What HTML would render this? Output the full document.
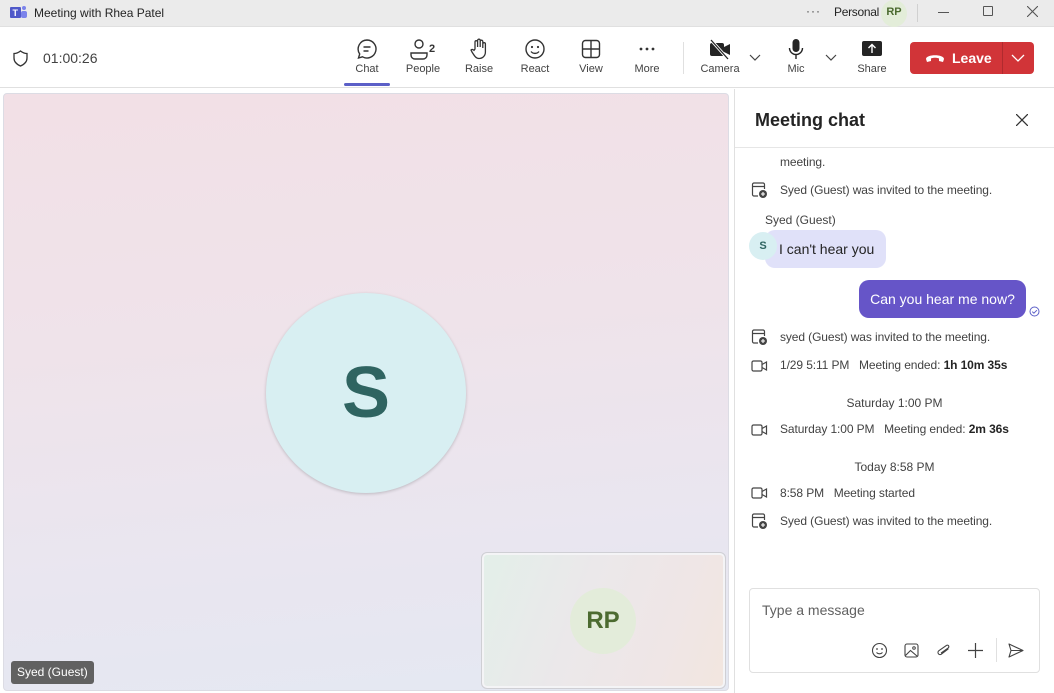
<!DOCTYPE html>
<html><head><meta charset="utf-8"><style>
*{box-sizing:border-box;margin:0;padding:0}
body{width:1054px;height:693px;overflow:hidden;font-family:"Liberation Sans",sans-serif;background:#fff;position:relative;color:#242424}
.abs{position:absolute}
.title{left:0;top:0;width:1054px;height:27px;background:#ebebeb;border-bottom:1px solid #e0e0e0}
.tb{top:27px;left:0;width:1054px;height:61px;background:#fff;border-bottom:1px solid #e0e0e0}
.btn{position:absolute;top:38px;width:50px;text-align:center;font-size:11px;color:#424242}
.btn svg{display:block;margin:0 auto 3px}
.stage{left:3px;top:93px;width:726px;height:598px;border-radius:4px;border:1px solid #dcdce4;background:linear-gradient(175deg,#f2e0e6 0%,#efe3ea 40%,#e9e6f0 75%,#e4e8f2 100%)}
.panel{left:734px;top:89px;width:320px;height:604px;background:#fff;border-left:1px solid #e0e0e0}
.sys{position:absolute;left:780px;font-size:12px;color:#424242;letter-spacing:-0.1px}
.ic{position:absolute;left:751px}
.ctr{position:absolute;left:735px;width:319px;text-align:center;font-size:12px;color:#424242}
</style></head><body>
<div class="abs title"></div>
<svg class="abs" style="left:10px;top:5px" width="17" height="15" viewBox="0 0 17 15"><rect x="0" y="2" width="11" height="11" rx="1" fill="#5059c9"/><text x="2.5" y="11" font-size="9" font-weight="bold" fill="#fff" font-family="Liberation Sans">T</text><circle cx="14" cy="3" r="2" fill="#7b83eb"/><rect x="11" y="6" width="6" height="7" rx="2" fill="#7b83eb"/></svg>
<div class="abs" style="left:34px;top:6px;font-size:12px;color:#242424">Meeting with Rhea Patel</div>
<div class="abs" style="left:806px;top:4px;font-size:12px;color:#424242;letter-spacing:1px">···</div>
<div class="abs" style="left:834px;top:5px;font-size:12px;color:#242424;letter-spacing:-0.3px">Personal</div>
<div class="abs" style="left:881px;top:0;width:26px;height:27px;border-radius:50%;background:#e3edd9;font-size:11px;font-weight:bold;color:#4c6b30;text-align:center;line-height:24px">RP</div>
<div class="abs" style="left:917px;top:4px;width:1px;height:18px;background:#d0d0d0"></div>
<div class="abs" style="left:938px;top:12px;width:11px;height:1px;background:#555"></div>
<div class="abs" style="left:983px;top:6px;width:10px;height:10px;border:1px solid #555;border-radius:1px"></div>
<svg class="abs" style="left:1027px;top:6px" width="11" height="11"><path d="M0 0L11 11M11 0L0 11" stroke="#555" stroke-width="1.1"/></svg>

<div class="abs tb"></div>
<svg class="abs" style="left:13px;top:50px" width="15" height="17" viewBox="0 0 15 17"><path d="M7.5 1C5 3 3 3.5 1 3.5V8c0 4 3 6.5 6.5 8C11 14.5 14 12 14 8V3.5C12 3.5 10 3 7.5 1z" fill="none" stroke="#333" stroke-width="1.3"/></svg>
<div class="abs" style="left:43px;top:50px;font-size:14px;color:#424242">01:00:26</div>

<div class="btn" style="left:342px"><svg width="22" height="22" viewBox="0 0 22 22"><path d="M11 2a9 9 0 1 1-4.5 16.8L2.5 20l1.2-4A9 9 0 0 1 11 2z" fill="none" stroke="#333" stroke-width="1.4"/><path d="M7.5 9h7M7.5 13h5" stroke="#333" stroke-width="1.4"/></svg>Chat</div>
<div class="abs" style="left:344px;top:83px;width:46px;height:3px;background:#5b5fc7;border-radius:2px"></div>
<div class="btn" style="left:398px"><svg width="30" height="22" viewBox="0 0 30 22"><circle cx="11" cy="6" r="4" fill="none" stroke="#333" stroke-width="1.4"/><path d="M3 15h16v2a4 4 0 0 1-4 4H7a4 4 0 0 1-4-4z" fill="none" stroke="#333" stroke-width="1.4"/><text x="21" y="14" font-size="11" font-weight="bold" fill="#333" font-family="Liberation Sans">2</text></svg>People</div>
<div class="btn" style="left:454px"><svg width="22" height="22" viewBox="0 0 22 22"><path d="M7 11V4a1.3 1.3 0 0 1 2.6 0v5V2.5a1.3 1.3 0 0 1 2.6 0V9V3.5a1.3 1.3 0 0 1 2.6 0V10V6a1.3 1.3 0 0 1 2.6 0v8c0 4-3 6.5-6.5 6.5C8 20.5 6.5 18 4 14l-1-2c.8-.9 2.2-.6 3 .3z" fill="none" stroke="#333" stroke-width="1.3"/></svg>Raise</div>
<div class="btn" style="left:510px"><svg width="22" height="22" viewBox="0 0 22 22"><circle cx="11" cy="11" r="9" fill="none" stroke="#333" stroke-width="1.4"/><circle cx="8" cy="9" r="1.1" fill="#333"/><circle cx="14" cy="9" r="1.1" fill="#333"/><path d="M7 13.5c2 2.5 6 2.5 8 0" fill="none" stroke="#333" stroke-width="1.4"/></svg>React</div>
<div class="btn" style="left:566px"><svg width="22" height="22" viewBox="0 0 22 22"><rect x="2.5" y="2.5" width="17" height="17" rx="3" fill="none" stroke="#333" stroke-width="1.4"/><path d="M11 2.5v17M2.5 11h17" stroke="#333" stroke-width="1.4"/></svg>View</div>
<div class="btn" style="left:622px"><svg width="22" height="22" viewBox="0 0 22 22"><circle cx="5" cy="11" r="1.4" fill="#333"/><circle cx="11" cy="11" r="1.4" fill="#333"/><circle cx="17" cy="11" r="1.4" fill="#333"/></svg>More</div>
<div class="abs" style="left:683px;top:42px;width:1px;height:32px;background:#e0e0e0"></div>
<div class="btn" style="left:695px"><svg width="24" height="22" viewBox="0 0 24 22"><rect x="2" y="5" width="14" height="13" rx="2" fill="#242424"/><path d="M16 9l6-3v11l-6-3z" fill="#242424"/><path d="M3 2l17 19" stroke="#fff" stroke-width="3"/><path d="M3 2l17 19" stroke="#242424" stroke-width="1.3"/></svg>Camera</div>
<svg class="abs" style="left:749px;top:54px" width="12" height="8"><path d="M1 1l5 5 5-5" fill="none" stroke="#444" stroke-width="1.2"/></svg>
<div class="btn" style="left:771px"><svg width="22" height="22" viewBox="0 0 22 22"><rect x="7.5" y="1" width="7" height="13" rx="3.5" fill="#242424"/><path d="M4.5 10a6.5 6.5 0 0 0 13 0M11 16.5V21" fill="none" stroke="#242424" stroke-width="1.4"/></svg>Mic</div>
<svg class="abs" style="left:825px;top:54px" width="12" height="8"><path d="M1 1l5 5 5-5" fill="none" stroke="#444" stroke-width="1.2"/></svg>
<div class="btn" style="left:847px"><svg width="22" height="22" viewBox="0 0 22 22"><rect x="1" y="3" width="20" height="15" rx="2" fill="#242424"/><path d="M11 15V7M7.5 10L11 6.5l3.5 3.5" fill="none" stroke="#fff" stroke-width="1.4"/></svg>Share</div>
<div class="abs" style="left:910px;top:42px;width:124px;height:32px;border-radius:4px;background:#d13438"></div>
<div class="abs" style="left:1002px;top:42px;width:1px;height:32px;background:#b02a2e"></div>
<svg class="abs" style="left:925px;top:53px" width="20" height="10" viewBox="0 0 20 10"><path d="M1 6C1 1 19 1 19 6l-1 3-4-1V5.5C12 4.5 8 4.5 6 5.5V8L2 9z" fill="#fff"/></svg>
<div class="abs" style="left:952px;top:50px;font-size:14px;font-weight:bold;color:#fff">Leave</div>
<svg class="abs" style="left:1011px;top:54px" width="14" height="8"><path d="M1 1l6 6 6-6" fill="none" stroke="#fff" stroke-width="1.3"/></svg>

<div class="abs stage"></div>
<div class="abs" style="left:266px;top:293px;width:200px;height:200px;border-radius:50%;background:#d8eff2;box-shadow:0 1px 3px rgba(0,0,0,.2);text-align:center;line-height:200px;font-size:72px;font-weight:bold;color:#2f6461">S</div>
<div class="abs" style="left:482px;top:553px;width:243px;height:135px;border-radius:5px;border:2px solid #f4f4f6;outline:1px solid #cfcfd4;background:linear-gradient(110deg,#e3efe9 0%,#ebe8ea 40%,#efe6e6 75%,#f2e6df 100%)"></div>
<div class="abs" style="left:570px;top:588px;width:66px;height:66px;border-radius:50%;background:#e3ecda;text-align:center;line-height:66px;font-size:24px;font-weight:bold;color:#4c6b30">RP</div>
<div class="abs" style="left:11px;top:661px;height:23px;padding:0 6px;background:#616161;border-radius:3px;color:#fff;font-size:12px;line-height:23px">Syed (Guest)</div>

<div class="abs panel"></div>
<div class="abs" style="left:755px;top:110px;font-size:18px;font-weight:bold">Meeting chat</div>
<svg class="abs" style="left:1016px;top:114px" width="12" height="12"><path d="M0 0L12 12M12 0L0 12" stroke="#333" stroke-width="1.3"/></svg>
<div class="abs" style="left:735px;top:147px;width:319px;height:1px;background:#e6e6e6"></div>

<div class="sys" style="top:155px">meeting.</div>
<svg class="ic" style="top:182px" width="17" height="17" viewBox="0 0 17 17"><path d="M7 14H3a1.5 1.5 0 0 1-1.5-1.5v-10A1.5 1.5 0 0 1 3 1h9a1.5 1.5 0 0 1 1.5 1.5V7M1.5 4.5h12" fill="none" stroke="#444" stroke-width="1.2"/><circle cx="12" cy="12" r="4" fill="#444"/><path d="M12 10v4M10 12h4" stroke="#fff" stroke-width="1.1"/></svg>
<div class="sys" style="top:183px">Syed (Guest) was invited to the meeting.</div>
<div class="abs" style="left:765px;top:213px;font-size:12px;color:#424242">Syed (Guest)</div>
<div class="abs" style="left:765px;top:230px;width:121px;height:38px;border-radius:10px;background:#e0e1f9;font-size:14px;line-height:38px;padding-left:14px">I can't hear you</div>
<div class="abs" style="left:749px;top:232px;width:28px;height:28px;border-radius:50%;background:#d8eff2;text-align:center;line-height:28px;font-size:11px;font-weight:bold;color:#2f6461">S</div>
<div class="abs" style="left:859px;top:280px;width:167px;height:38px;border-radius:10px;color:#fff;font-size:14px;line-height:38px;text-align:center;background:#6655c8">Can you hear me now?</div>
<svg class="abs" style="left:1029px;top:306px" width="11" height="11"><circle cx="5.5" cy="5.5" r="4.5" fill="none" stroke="#5b5fc7"/><path d="M3.3 5.6l1.6 1.6 3-3" fill="none" stroke="#5b5fc7"/></svg>

<svg class="ic" style="top:329px" width="17" height="17" viewBox="0 0 17 17"><path d="M7 14H3a1.5 1.5 0 0 1-1.5-1.5v-10A1.5 1.5 0 0 1 3 1h9a1.5 1.5 0 0 1 1.5 1.5V7M1.5 4.5h12" fill="none" stroke="#444" stroke-width="1.2"/><circle cx="12" cy="12" r="4" fill="#444"/><path d="M12 10v4M10 12h4" stroke="#fff" stroke-width="1.1"/></svg>
<div class="sys" style="top:330px">syed (Guest) was invited to the meeting.</div>
<svg class="ic" style="top:359px" width="17" height="14" viewBox="0 0 17 14"><rect x="1" y="2" width="10" height="10" rx="1.5" fill="none" stroke="#444" stroke-width="1.2"/><path d="M11 5.5l4.5-2.5v8L11 8.5" fill="none" stroke="#444" stroke-width="1.2"/></svg>
<div class="sys" style="top:358px">1/29 5:11 PM&nbsp;&nbsp;&nbsp;Meeting ended: <b style="color:#242424">1h 10m 35s</b></div>
<div class="ctr" style="top:396px">Saturday 1:00 PM</div>
<svg class="ic" style="top:423px" width="17" height="14" viewBox="0 0 17 14"><rect x="1" y="2" width="10" height="10" rx="1.5" fill="none" stroke="#444" stroke-width="1.2"/><path d="M11 5.5l4.5-2.5v8L11 8.5" fill="none" stroke="#444" stroke-width="1.2"/></svg>
<div class="sys" style="top:422px">Saturday 1:00 PM&nbsp;&nbsp;&nbsp;Meeting ended: <b style="color:#242424">2m 36s</b></div>
<div class="ctr" style="top:460px">Today 8:58 PM</div>
<svg class="ic" style="top:486px" width="17" height="14" viewBox="0 0 17 14"><rect x="1" y="2" width="10" height="10" rx="1.5" fill="none" stroke="#444" stroke-width="1.2"/><path d="M11 5.5l4.5-2.5v8L11 8.5" fill="none" stroke="#444" stroke-width="1.2"/></svg>
<div class="sys" style="top:486px">8:58 PM&nbsp;&nbsp;&nbsp;Meeting started</div>
<svg class="ic" style="top:513px" width="17" height="17" viewBox="0 0 17 17"><path d="M7 14H3a1.5 1.5 0 0 1-1.5-1.5v-10A1.5 1.5 0 0 1 3 1h9a1.5 1.5 0 0 1 1.5 1.5V7M1.5 4.5h12" fill="none" stroke="#444" stroke-width="1.2"/><circle cx="12" cy="12" r="4" fill="#444"/><path d="M12 10v4M10 12h4" stroke="#fff" stroke-width="1.1"/></svg>
<div class="sys" style="top:514px">Syed (Guest) was invited to the meeting.</div>

<div class="abs" style="left:749px;top:588px;width:291px;height:85px;border:1px solid #e0e0e0;border-radius:4px;background:#fff"></div>
<div class="abs" style="left:762px;top:602px;font-size:14px;color:#616161">Type a message</div>
<svg class="abs" style="left:871px;top:642px" width="17" height="17" viewBox="0 0 17 17"><circle cx="8.5" cy="8.5" r="7" fill="none" stroke="#424242" stroke-width="1.1"/><circle cx="6" cy="7" r=".9" fill="#424242"/><circle cx="11" cy="7" r=".9" fill="#424242"/><path d="M5.5 10.5c1.7 1.8 4.3 1.8 6 0" fill="none" stroke="#424242" stroke-width="1.1"/></svg>
<svg class="abs" style="left:903px;top:642px" width="17" height="17" viewBox="0 0 17 17"><rect x="2" y="2" width="13" height="13" rx="2" fill="none" stroke="#424242" stroke-width="1.1"/><path d="M2.5 13.5l5-5 7 6" fill="none" stroke="#424242" stroke-width="1.1"/><circle cx="11" cy="6" r="1.3" fill="none" stroke="#424242"/></svg>
<svg class="abs" style="left:935px;top:642px" width="17" height="17" viewBox="0 0 17 17"><path d="M13 6l-6 6.5a2 2 0 0 1-3-3L10.5 3a1.5 1.5 0 0 1 2.2 2.1L6.5 11.5" fill="none" stroke="#424242" stroke-width="1.1" transform="rotate(10 8.5 8.5)"/></svg>
<svg class="abs" style="left:967px;top:642px" width="17" height="17"><path d="M8.5 1v15M1 8.5h15" stroke="#424242" stroke-width="1.2"/></svg>
<div class="abs" style="left:996px;top:638px;width:1px;height:24px;background:#e0e0e0"></div>
<svg class="abs" style="left:1007px;top:642px" width="18" height="17" viewBox="0 0 18 17"><path d="M2 2l14 6.5L2 15l2-6.5z M4 8.5h12" fill="none" stroke="#424242" stroke-width="1.1" stroke-linejoin="round"/></svg>
</body></html>
